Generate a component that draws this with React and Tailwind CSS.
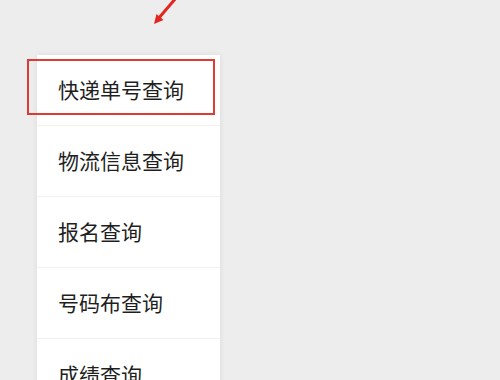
const items = ['快递单号查询', '物流信息查询', '报名查询', '号码布查询', '成绩查询']

function Arrow() {
  return (
    <svg className="absolute left-[148px] top-0" width="34" height="30" viewBox="0 0 34 30">
      <line x1="28" y1="-2" x2="10" y2="19" stroke="#e3261f" strokeWidth="3" strokeLinecap="round" />
      <path d="M6 24 L8.5 14 L15.5 20 Z" fill="#e3261f" />
    </svg>
  )
}

export default function App() {
  return (
    <div
      className="relative h-[380px] w-[500px] overflow-hidden bg-[#ededed]"
      style={{ fontFamily: '"Noto Sans CJK SC", "Noto Sans", sans-serif' }}
    >
      <Arrow />
      <div className="ml-[37px] mt-[55px] w-[183px] bg-white shadow-[0_0_6px_rgba(0,0,0,0.08)]">
        {items.map((item, i) => (
          <div
            key={item}
            className={`relative flex h-[71px] items-center pl-[21px] text-[21px] text-[#1f1f1f] ${
              i < items.length - 1 ? 'border-b border-[#f1f1f1]' : ''
            }`}
          >
            {item}
            {i === 0 && (
              <div className="absolute left-[-10px] top-[4px] h-[56px] w-[188px] border-2 border-[#de3b35]" />
            )}
          </div>
        ))}
      </div>
    </div>
  )
}
